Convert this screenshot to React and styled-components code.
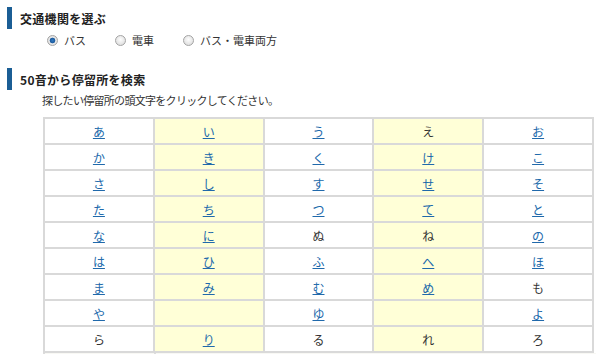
import React from "react";
import styled, { createGlobalStyle } from "styled-components";

const GlobalStyle = createGlobalStyle`
  body {
    margin: 0;
    background: #fff;
    font-family: "Noto Sans CJK JP", "Noto Sans", sans-serif;
    color: #333;
  }
`;

const rows = [
  [["あ", 1], ["い", 1], ["う", 1], ["え", 0], ["お", 1]],
  [["か", 1], ["き", 1], ["く", 1], ["け", 1], ["こ", 1]],
  [["さ", 1], ["し", 1], ["す", 1], ["せ", 1], ["そ", 1]],
  [["た", 1], ["ち", 1], ["つ", 1], ["て", 1], ["と", 1]],
  [["な", 1], ["に", 1], ["ぬ", 0], ["ね", 0], ["の", 1]],
  [["は", 1], ["ひ", 1], ["ふ", 1], ["へ", 1], ["ほ", 1]],
  [["ま", 1], ["み", 1], ["む", 1], ["め", 1], ["も", 0]],
  [["や", 1], ["", 0], ["ゆ", 1], ["", 0], ["よ", 1]],
  [["ら", 0], ["り", 1], ["る", 0], ["れ", 0], ["ろ", 0]],
];

const Page = styled.div`
  padding: 7px 0 0 7px;
`;

const Heading = styled.h2`
  display: flex;
  align-items: center;
  height: 22px;
  margin: ${(p) => p.$top || 0}px 0 0;
  padding-left: 8px;
  border-left: 5px solid #1b5e95;
  font-size: 12px;
  font-weight: bold;
  color: #222;
  letter-spacing: 0.3px;
`;

const RadioRow = styled.div`
  display: flex;
  align-items: center;
  height: 16px;
  margin-top: 3px;
  padding-left: 40px;
  font-size: 11px;
  color: #333;
`;

const RadioLabel = styled.label`
  display: flex;
  align-items: center;
  gap: 6px;
  margin-right: 29px;
  cursor: pointer;
`;

const Radio = styled.input.attrs({ type: "radio" })`
  appearance: none;
  margin: 0;
  width: 11px;
  height: 11px;
  border-radius: 50%;
  border: 1px solid #a4a4a4;
  background: radial-gradient(circle at 50% 40%, #fdfdfd 0%, #e2e2e2 70%, #cfcfcf 100%);
  &:checked {
    background: radial-gradient(circle, #2f78c0 0, #1e5c9e 2.5px, #eaeaea 3.2px, #d4d4d4 100%);
  }
`;

const Note = styled.p`
  margin: 3px 0 0;
  padding-left: 35px;
  height: 14px;
  line-height: 14px;
  font-size: 11px;
  letter-spacing: -0.7px;
  color: #333;
`;

const Kana = styled.table`
  margin: 10px 0 0 36px;
  width: 551px;
  border-collapse: collapse;
  table-layout: fixed;
  font-size: 12px;
`;

const Cell = styled.td`
  height: 24px;
  padding: 0;
  text-align: center;
  border: 2px solid #d9d9d9;
  background: ${(p) => (p.$yellow ? "#ffffd7" : "#fff")};
  color: #333;
`;

const KanaLink = styled.a`
  color: #2069ab;
  text-decoration: underline;
`;

const Tail = styled.div`
  display: grid;
  grid-template-columns: 109px 1fr;
  margin-left: 36px;
  width: 551px;
  height: 10px;
  background: #f8f8f4;
  border-left: 2px solid #dcdcdc;
  & > span + span {
    border-left: 2px solid #dcdcdc;
  }
`;

export default function App() {
  return (
    <Page>
      <GlobalStyle />
      <Heading>交通機関を選ぶ</Heading>
      <RadioRow>
        <RadioLabel>
          <Radio name="mode" defaultChecked />
          バス
        </RadioLabel>
        <RadioLabel>
          <Radio name="mode" />
          電車
        </RadioLabel>
        <RadioLabel>
          <Radio name="mode" />
          バス・電車両方
        </RadioLabel>
      </RadioRow>
      <Heading $top={20}>50音から停留所を検索</Heading>
      <Note>探したい停留所の頭文字をクリックしてください。</Note>
      <Kana>
        <tbody>
          {rows.map((row, r) => (
            <tr key={r}>
              {row.map(([ch, link], c) => (
                <Cell key={c} $yellow={c % 2 === 1}>
                  {link ? <KanaLink href="#">{ch}</KanaLink> : ch}
                </Cell>
              ))}
            </tr>
          ))}
        </tbody>
      </Kana>
      <Tail>
        <span />
        <span />
      </Tail>
    </Page>
  );
}
